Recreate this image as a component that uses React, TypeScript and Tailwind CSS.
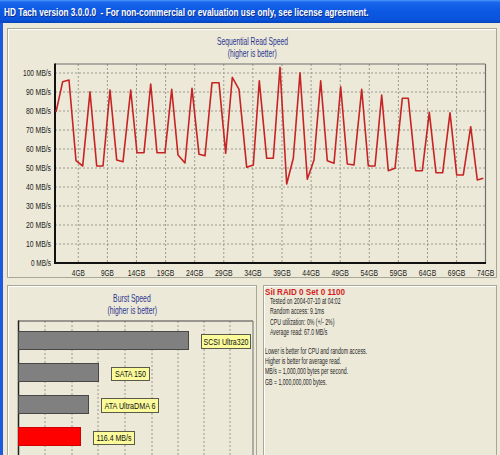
import React from "react";

const FONT = "Liberation Sans, Arial, sans-serif";

// sequential read trace, in page pixels (x, y)
const readTrace: Array<[number, number]> = [
  [56, 112], [62.7, 81.7], [69, 80], [76, 160.7], [82.7, 166], [90, 91.7], [96.7, 166], [103, 166],
  [110, 90], [116.7, 160], [123, 161.7], [130.7, 90], [137, 152.7], [144, 152.7], [150.7, 84],
  [157, 152.7], [165, 152.7], [171.7, 89.3], [178, 155], [185, 163], [192, 88.3], [199, 154.3],
  [205, 155.7], [212, 82.7], [219, 82.7], [225.7, 153.3], [232.3, 77.3], [239, 89.3], [246.7, 167.3],
  [253.3, 165], [259.3, 80.7], [266.7, 158.3], [273.3, 158.3], [280, 67.3], [286.7, 184], [293.3, 158.3],
  [300, 72.7], [307.3, 179.3], [314, 160], [320.7, 80.7], [327.3, 160.7], [334, 163.3], [340.7, 86.7],
  [347.3, 164], [354, 165], [361.7, 89.3], [368.3, 166], [375, 166], [381.7, 95], [388.3, 170.7],
  [395, 168.3], [402.3, 98.3], [408.3, 98.3], [415.7, 170.7], [422.3, 170.7], [429.3, 112.3],
  [436, 172.7], [442.7, 172.7], [450, 112.7], [456.7, 175], [463.3, 175], [470.7, 126.7], [477.3, 180],
  [483.3, 178.3],
];

const yFor = (mbs: number) => 263 - mbs * 1.9;
const xFor = (gb: number) => 55 + gb * 5.82;

const mbTicks = [0, 10, 20, 30, 40, 50, 60, 70, 80, 90, 100];
const gbTicks = [4, 9, 14, 19, 24, 29, 34, 39, 44, 49, 54, 59, 64, 69, 74];

const bursts = [
  { label: "SCSI Ultra320", y: 331, w: 170, fill: "#808080", stroke: "#474747", box: { x: 201, y: 334, w: 49, h: 14 }, tl: 45 },
  { label: "SATA 150", y: 363, w: 80, fill: "#808080", stroke: "#474747", box: { x: 111, y: 367, w: 38, h: 13 }, tl: 31 },
  { label: "ATA UltraDMA 6", y: 395, w: 70, fill: "#808080", stroke: "#474747", box: { x: 101, y: 398, w: 57, h: 14 }, tl: 51 },
  { label: "116.4 MB/s", y: 427, w: 62, fill: "#ff0000", stroke: "#d00000", box: { x: 93, y: 431, w: 41, h: 13 }, tl: 35 },
];

const burstGrid = [45, 72, 98, 125, 152, 178, 204, 230];

const SequentialChart = () => (
  <svg width={488} height={218} viewBox="8 59 488 218" className="block">
    {mbTicks.slice(1).map((v) => (
      <line key={`h${v}`} x1={55} x2={485} y1={yFor(v)} y2={yFor(v)} stroke="#9c9a90" strokeWidth={1} strokeDasharray="2 2" />
    ))}
    {gbTicks.slice(0, -1).map((g) => (
      <line key={`v${g}`} x1={xFor(g)} x2={xFor(g)} y1={64} y2={263} stroke="#9c9a90" strokeWidth={1} strokeDasharray="2 2" />
    ))}
    <line x1={55} x2={485.5} y1={64} y2={64} stroke="#6e6e6e" strokeWidth={1.2} />
    <line x1={485.5} x2={485.5} y1={64} y2={263} stroke="#6e6e6e" strokeWidth={1.2} />
    <line x1={55} x2={55} y1={63.5} y2={264} stroke="#111" strokeWidth={2} />
    <line x1={54} x2={486} y1={263} y2={263} stroke="#111" strokeWidth={2} />

    {mbTicks.map((v) => (
      <text
        key={`ly${v}`}
        x={51}
        y={yFor(v)}
        textAnchor="end"
        dominantBaseline="central"
        fontFamily={FONT}
        fontSize={8.5}
        fill="#222"
        textLength={v === 100 ? 28 : v === 0 ? 20 : 25}
        lengthAdjust="spacingAndGlyphs"
      >
        {v} MB/s
      </text>
    ))}
    {gbTicks.map((g) => (
      <text
        key={`lx${g}`}
        x={xFor(g)}
        y={273.3}
        textAnchor="middle"
        dominantBaseline="central"
        fontFamily={FONT}
        fontSize={8.5}
        fill="#222"
        textLength={g < 10 ? 13 : 17.5}
        lengthAdjust="spacingAndGlyphs"
      >
        {g}GB
      </text>
    ))}

    <polyline
      points={readTrace.map(([x, y]) => `${x},${y}`).join(" ")}
      fill="none"
      stroke="#c62424"
      strokeWidth={1.6}
      strokeLinejoin="round"
    />
  </svg>
);

const BurstChart = () => (
  <svg width={248} height={140} viewBox="8 316 248 140" className="block">
    {burstGrid.map((x) => (
      <line key={x} x1={x} x2={x} y1={321} y2={460} stroke="#9c9a90" strokeWidth={1} strokeDasharray="2 2" />
    ))}
    <line x1={18} x2={253} y1={321} y2={321} stroke="#444" strokeWidth={1.2} />
    <line x1={253} x2={253} y1={321} y2={460} stroke="#6e6e6e" strokeWidth={1} />
    <line x1={18.5} x2={18.5} y1={320.5} y2={460} stroke="#222" strokeWidth={1.5} />

    {bursts.map((b) => (
      <g key={b.label}>
        <rect x={18.5} y={b.y + 0.5} width={b.w} height={18} fill={b.fill} stroke={b.stroke} strokeWidth={1} />
        <rect x={b.box.x + 0.5} y={b.box.y + 0.5} width={b.box.w} height={b.box.h} fill="#fbfb9c" stroke="#5a5a4a" strokeWidth={1} />
        <text
          x={b.box.x + b.box.w / 2 + 0.5}
          y={b.box.y + b.box.h / 2 + 0.8}
          textAnchor="middle"
          dominantBaseline="central"
          fontFamily={FONT}
          fontSize={8.5}
          fill="#111"
          textLength={b.tl}
          lengthAdjust="spacingAndGlyphs"
        >
          {b.label}
        </text>
      </g>
    ))}
  </svg>
);

const InfoLine = ({ children }: { children: React.ReactNode }) => (
  <div className="origin-left scale-x-[0.61] whitespace-nowrap text-[8.5px] leading-[10.4px] text-[#262626]">{children}</div>
);

export default function App() {
  return (
    <div className="flex h-[455px] w-[500px] flex-col overflow-hidden bg-[#1c5ae0] font-['Liberation_Sans',Arial,sans-serif]">
      <div className="flex h-[23px] shrink-0 items-center bg-[linear-gradient(to_bottom,#4b95f8_0%,#1a66ec_10%,#0c59e4_45%,#0a53dc_85%,#0743bd_100%)] pl-[4px] pt-[1px]">
        <span className="block origin-left scale-x-[0.75] whitespace-pre text-[11px] font-bold text-white [text-shadow:1px_1px_0_#0b2a86]">
          HD Tach version 3.0.0.0  - For non-commercial or evaluation use only, see license agreement.
        </span>
      </div>

      <div className="ml-[3px] flex flex-1 flex-col gap-[7px] bg-[#ece9d8] pl-[4px] pr-[3px] pt-[5px]">
        <section className="h-[250px] w-[490px] shrink-0 border border-[#a9a796] shadow-[inset_1px_1px_0_#fff]">
          <div className="h-[30px] pt-[7px] text-center text-[10.5px] leading-[11.5px] text-[#2b3490]">
            <div className="inline-block scale-x-[0.64] whitespace-nowrap">Sequential Read Speed</div>
            <br />
            <div className="inline-block scale-x-[0.64] whitespace-nowrap">(higher is better)</div>
          </div>
          <SequentialChart />
        </section>

        <div className="flex gap-[6px]">
          <section className="h-[190px] w-[250px] shrink-0 border border-[#a9a796] shadow-[inset_1px_1px_0_#fff]">
            <div className="h-[30px] pt-[6px] text-center text-[10.5px] leading-[12px] text-[#2b3490]">
              <div className="inline-block scale-x-[0.65] whitespace-nowrap">Burst Speed</div>
              <br />
              <div className="inline-block scale-x-[0.65] whitespace-nowrap">(higher is better)</div>
            </div>
            <BurstChart />
          </section>

          <section className="h-[190px] w-[234px] shrink-0 border border-[#a9a796] pl-[1px] pt-[2px] shadow-[inset_1px_1px_0_#fff]">
            <div className="origin-left scale-x-[0.85] whitespace-nowrap text-[9.5px] font-bold leading-[8px] text-[#d21d1d]">
              SiI RAID 0 Set 0 1100
            </div>
            <div className="pl-[5px]">
              <InfoLine>Tested on 2004-07-10 at 04:02</InfoLine>
              <InfoLine>Random access: 9.1ms</InfoLine>
              <InfoLine>CPU utilization: 0% (+/- 2%)</InfoLine>
              <InfoLine>Average read: 67.0 MB/s</InfoLine>
            </div>
            <div className="mt-[8px]">
              <InfoLine>Lower is better for CPU and random access.</InfoLine>
              <InfoLine>Higher is better for average read.</InfoLine>
              <InfoLine>MB/s = 1,000,000 bytes per second.</InfoLine>
              <InfoLine>GB = 1,000,000,000 bytes.</InfoLine>
            </div>
          </section>
        </div>
      </div>
    </div>
  );
}
